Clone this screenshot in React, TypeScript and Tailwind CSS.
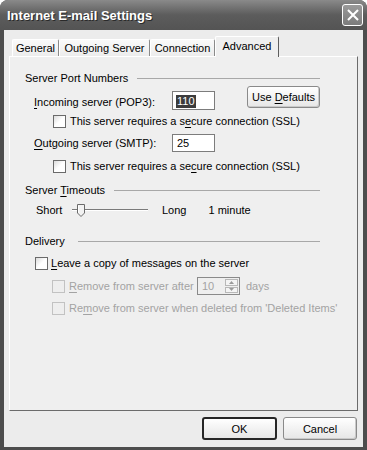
import React from 'react';

function U({ children }: { children: React.ReactNode }) {
  return <span className="underline underline-offset-[2px] decoration-1">{children}</span>;
}

function CheckBox({ disabled = false }: { disabled?: boolean }) {
  return (
    <span
      className={`block w-[13px] h-[13px] shrink-0 border ${
        disabled
          ? 'border-[#c2c2c2] bg-[#eeeeee]'
          : 'border-[#6a6a6a] bg-gradient-to-br from-[#dcdcdc] via-white to-white'
      }`}
    />
  );
}

// group caption with the etched line running to the right
function GroupHeader({ title, lineGap }: { title: React.ReactNode; lineGap: string }) {
  return (
    <div className="flex items-center h-[14px] pr-[37px]">
      <span>{title}</span>
      <span className={`flex-1 h-px bg-[#a8a8a8] ${lineGap}`} />
    </div>
  );
}

const tabs = [
  { label: 'General', w: 'w-[47px]' },
  { label: 'Outgoing Server', w: 'w-[91px]' },
  { label: 'Connection', w: 'w-[65px]' },
];

export default function App() {
  return (
    <div className="w-[367px] h-[450px] bg-[#4d4d4d] rounded-t-[8px] overflow-hidden flex flex-col font-['Liberation_Sans',Arial,sans-serif] text-[11px] leading-[14px] text-black">
      {/* title bar */}
      <div className="h-[30px] shrink-0 flex items-center justify-between pl-[7px] pr-[4px] bg-gradient-to-b from-[#8a8a8a] via-[#5c5c5c] to-[#545454]">
        <span className="pt-[2px] text-[13px] font-bold text-white [text-shadow:1px_1px_0_#2a2a2a]">
          Internet E-mail Settings
        </span>
        <div className="w-[21px] h-[22px] border border-white rounded-[3px] bg-gradient-to-b from-[#9a9a9a] to-[#7c7c7c] flex items-center justify-center">
          <svg viewBox="0 0 14 14" className="w-[12px] h-[12px]">
            <path d="M2 2 L12 12 M12 2 L2 12" stroke="white" strokeWidth="2.4" strokeLinecap="square" />
          </svg>
        </div>
      </div>

      {/* dialog body */}
      <div className="flex-1 mx-[4px] mb-[3px] bg-[#ececec] px-[5px] pt-[6px] flex flex-col">
        <div className="h-[20px] flex items-end pl-[3px] relative z-10">
          {tabs.map((t) => (
            <div
              key={t.label}
              className={`${t.w} h-[17px] flex items-center justify-center border-t border-l border-r border-t-white border-l-white border-r-[#8a8a8a] bg-gradient-to-b from-[#fafafa] to-[#ececec] rounded-t-[2px]`}
            >
              {t.label}
            </div>
          ))}
          <div className="w-[64px] h-[21px] -mb-px flex items-start justify-center pt-[2px] border-t border-l border-r border-t-white border-l-white border-r-[#5e5e5e] bg-[#efefef] rounded-t-[2px]">
            Advanced
          </div>
        </div>

        <div className="h-[355px] border border-l-white border-t-white border-r-[#6b6b6b] border-b-[#6b6b6b] bg-[#efefef] pl-[15px] pt-[14px] flex flex-col">
          <GroupHeader title="Server Port Numbers" lineGap="ml-[9px]" />

          <div className="mt-[1px] h-[24px] flex items-start">
            <span className="ml-[9px] w-[138px] mt-[9px]">
              <U>I</U>ncoming server (POP3):
            </span>
            <div className="mt-[5px] w-[43px] h-[19px] border border-[#7c7c7c] bg-white pl-[3px] pt-[2px]">
              <span className="bg-[#3c3c3c] text-white inline-block leading-[13px] px-px">110</span>
            </div>
            <div className="ml-[32px] w-[73px] h-[22px] border border-[#8a8a8a] rounded-[3px] bg-gradient-to-b from-white to-[#e6e6e6] shadow-[inset_-1px_-1px_0_#c9c9c9] flex items-center justify-center">
              <span>
                Use <U>D</U>efaults
              </span>
            </div>
          </div>

          <div className="mt-[4px] h-[14px] flex items-center">
            <span className="ml-[28px]">
              <CheckBox />
            </span>
            <span className="ml-[4px]">
              This server requires a s<U>e</U>cure connection (SSL)
            </span>
          </div>

          <div className="mt-[6px] h-[18px] flex items-center">
            <span className="ml-[9px] w-[138px]">
              <U>O</U>utgoing server (SMTP):
            </span>
            <div className="w-[43px] h-[18px] border border-[#7c7c7c] bg-white pl-[4px] flex items-center">25</div>
          </div>

          <div className="mt-[7px] h-[14px] flex items-center">
            <span className="ml-[28px]">
              <CheckBox />
            </span>
            <span className="ml-[4px]">
              This server requires a se<U>c</U>ure connection (SSL)
            </span>
          </div>

          <div className="mt-[10px]">
            <GroupHeader
              title={
                <>
                  Server <U>T</U>imeouts
                </>
              }
              lineGap="ml-[9px]"
            />
          </div>

          <div className="mt-[6px] h-[14px] flex items-center">
            <span className="ml-[11px] w-[34px]">Short</span>
            <svg width="80" height="14" viewBox="0 0 80 14" className="shrink-0">
              <line x1="2" y1="6.5" x2="78" y2="6.5" stroke="#7a7a7a" />
              <line x1="2" y1="7.5" x2="78" y2="7.5" stroke="#ffffff" />
              <path d="M7.5 1.5 H14.5 V10 L11 13.5 L7.5 10 Z" fill="#f2f2f2" stroke="#6a6a6a" />
              <line x1="8.5" y1="2.5" x2="8.5" y2="9.5" stroke="#ffffff" />
            </svg>
            <span className="ml-[12px]">Long</span>
            <span className="ml-[22px]">1 minute</span>
          </div>

          <div className="mt-[17px]">
            <GroupHeader title="Delivery" lineGap="ml-[13px]" />
          </div>

          <div className="mt-[8px] h-[14px] flex items-center">
            <span className="ml-[10px]">
              <CheckBox />
            </span>
            <span className="ml-[3px]">
              <U>L</U>eave a copy of messages on the server
            </span>
          </div>

          <div className="mt-[7px] h-[18px] flex items-center text-[#a3a3a3]">
            <span className="ml-[27px]">
              <CheckBox disabled />
            </span>
            <span className="ml-[4px] w-[128px]">
              <U>R</U>emove from server after
            </span>
            <div className="w-[43px] h-[18px] border border-[#8a8a8a] bg-[#efefef] flex">
              <span className="flex-1 pl-[4px] leading-[16px]">10</span>
              <div className="w-[15px] flex flex-col p-px gap-px">
                <div className="flex-1 border border-[#b8b8b8] bg-[#f4f4f4] flex items-center justify-center">
                  <svg width="5" height="3" viewBox="0 0 5 3">
                    <path d="M0 3 L2.5 0 L5 3 Z" fill="#9a9a9a" />
                  </svg>
                </div>
                <div className="flex-1 border border-[#b8b8b8] bg-[#f4f4f4] flex items-center justify-center">
                  <svg width="5" height="3" viewBox="0 0 5 3">
                    <path d="M0 0 L2.5 3 L5 0 Z" fill="#9a9a9a" />
                  </svg>
                </div>
              </div>
            </div>
            <span className="ml-[6px]">days</span>
          </div>

          <div className="mt-[6px] h-[14px] flex items-center text-[#a3a3a3]">
            <span className="ml-[27px]">
              <CheckBox disabled />
            </span>
            <span className="ml-[4px]">
              Re<U>m</U>ove from server when deleted from 'Deleted Items'
            </span>
          </div>
        </div>

        <div className="mt-[6px] flex justify-end gap-[6px] pr-px">
          <div className="w-[75px] h-[23px] border-2 border-[#262626] rounded-[3px] bg-gradient-to-b from-white to-[#e6e6e6] flex items-center justify-center">
            OK
          </div>
          <div className="w-[74px] h-[23px] border border-[#8a8a8a] rounded-[3px] bg-gradient-to-b from-white to-[#e6e6e6] shadow-[inset_-1px_-1px_0_#c9c9c9] flex items-center justify-center">
            Cancel
          </div>
        </div>
      </div>
    </div>
  );
}
